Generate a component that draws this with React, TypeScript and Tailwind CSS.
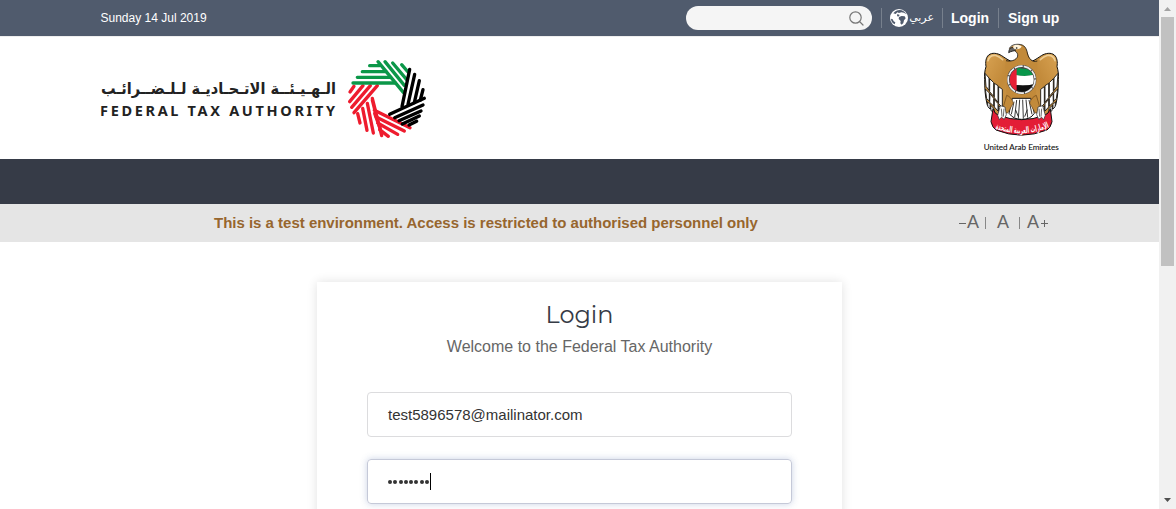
import React from "react";

function RingLogo() {
  return (
    <svg className="h-[100px] w-[100px] shrink-0" viewBox="0 0 300 300" fill="none" strokeWidth="10" strokeLinecap="round">
      <g stroke="#ee1c2e">
        <path d="M42 109L30 126M69 107L29 155M91 107L35 172M112 107L42 188" />
        <path d="M53 191L60 219M68 175L81 241M82 160L100 249M97 145L125 257M97 150L105 182" />
        <path d="M103 181L210 233M107 200L193 243M113 219L173 253M119 239L145 259M104 190L122 240" />
      </g>
      <g stroke="#0b9748">
        <path d="M89 47H118M67 65H138M52 82H152M39 99H166" />
        <path d="M114 35L190 127M135 35L193 106M158 39L200 89M185 44L204 66" />
      </g>
      <g stroke="#000">
        <path d="M209 58L186 170M224 73L204 163M238 92L223 158M249 119L241 150" />
        <path d="M253 145L149 193M249 165L164 203M243 183L177 212M238 198L187 222M230 214L207 225" />
      </g>
    </svg>
  );
}

function Wing() {
  return (
    <g>
      <path
        d="M150 76C128 84 112 70 95 59C82 51 66 49 56 57C47 65 46 79 48 92C44 104 43 118 44 131C44 156 45 180 52 208L72 229L94 251L108 231L124 197L150 180Z"
        fill="url(#gold)" stroke="#111" strokeWidth="3" strokeLinejoin="round"
      />
      <g fill="#fff" stroke="#111" strokeWidth="2.6" strokeLinejoin="round">
        <path d="M45 112L57 126V163L48 151ZM59 128L71 140V181L59 167ZM73 142L84 149V199L73 185ZM86 152L97 160V214L86 203Z" />
        <path d="M46 159L58 171V195L50 188ZM60 173L71 187V210L59 199ZM73 190L84 203V225L73 213ZM86 209L98 219L94 238L86 228Z" />
        <path d="M52 197L60 205V219L54 213ZM62 208L72 218V229L63 224Z" />
      </g>
      <path d="M54 74Q58 57 76 58Q88 62 98 71" stroke="#f7dfae" strokeWidth="5" fill="none" opacity=".75" strokeLinecap="round" />
    </g>
  );
}

function Emblem() {
  return (
    <svg className="h-[124px] w-[100px] shrink-0 overflow-visible" viewBox="0 0 300 372" fill="none">
      <defs>
        <linearGradient id="gold" x1="0" y1="0" x2="1" y2="1">
          <stop stopColor="#d9a353" />
          <stop offset=".45" stopColor="#c28a3a" />
          <stop offset="1" stopColor="#d3a155" />
        </linearGradient>
        <clipPath id="flag"><circle cx="155" cy="131" r="36" /></clipPath>
        <path id="ribbonLine" d="M73 277Q160 308 240 273" />
      </defs>
      <Wing />
      <g transform="matrix(-1 0 0 1 309 0)"><Wing /></g>
      <path d="M117 39C123 28 141 22 157 27C173 34 171 56 182 70Q189 80 202 78L198 178L175 209H132L109 176L106 76C126 78 143 70 143 58C143 49 135 42 117 39Z" fill="#c28a3a" />
      <path d="M118 38C121 29 133 24 146 25C164 25 170 39 172 51C176 69 187 80 202 75M108 74C128 79 145 68 143 56C142 50 138 47 134 45" stroke="#111" strokeWidth="2.4" />
      <path d="M130 29Q143 23 155 31Q151 43 130 39Z" fill="#fff4dd" />
      <path d="M129 35C121 34 117 39 116 50C123 45 131 46 138 42" fill="#666" stroke="#111" strokeWidth="2.5" />
      <circle cx="140" cy="36" r="2.5" fill="#111" />
      <path d="M127 187L117 232Q131 251 155 250Q181 251 193 232L182 187Z" fill="#fff" stroke="#111" strokeWidth="3" />
      <path d="M132 197L124 235M140 192L134 244M149 191L145 248M158 191L160 248M168 191L173 245M177 192L186 235M137 222L145 242M172 221L164 242" stroke="#111" strokeWidth="2.5" />
      <path d="M110 178Q124 183 130 201L113 231L95 229Z" fill="#c28a3a" stroke="#6b4517" strokeWidth="2" />
      <path d="M199 178Q185 183 179 201L196 231L214 229Z" fill="#c28a3a" stroke="#6b4517" strokeWidth="2" />
      <circle cx="155" cy="131" r="44" fill="#444" />
      <circle cx="155" cy="131" r="40.5" stroke="#eee" strokeWidth="5" strokeDasharray="25 3" />
      <g clipPath="url(#flag)">
        <path d="M138 93Q165 104 194 96V116Q166 123 138 117Z" fill="#08964a" />
        <path d="M138 117Q166 123 194 116V144Q166 151 138 147Z" fill="#fff" />
        <path d="M138 147Q166 151 194 144V168H138Z" fill="#111" />
        <path d="M118 94H140V168H118Z" fill="#e61e35" />
      </g>
      <path d="M69 218Q74 234 86 238Q155 264 223 238Q236 234 241 218L246 257Q242 275 231 282Q154 313 78 282Q67 275 63 257Z" fill="#e31d36" stroke="#111" strokeWidth="3" strokeLinejoin="round" />
      <text fontFamily="'DejaVu Sans', sans-serif" fontSize="26" fontWeight="700" fill="#fff" textAnchor="middle">
        <textPath href="#ribbonLine" startOffset="50%" textLength="166" lengthAdjust="spacingAndGlyphs">الإمارات العربية المتحدة</textPath>
      </text>
      <g fill="#fff" stroke="#333" strokeWidth="2.2" strokeLinejoin="round">
        <path d="M91 209L105 213L109 236L103 250L94 244L88 251L83 238Z" />
        <path d="M218 209L204 213L200 236L206 250L215 244L221 251L226 238Z" />
        <path d="M94 218L96 242M102 218L100 242M215 218L213 242M207 218L209 242" />
      </g>
      <text x="41" y="342" fontFamily="Lato, sans-serif" fontSize="24.5" fill="#111" stroke="#111" strokeWidth=".3" textLength="225" lengthAdjust="spacingAndGlyphs">United Arab Emirates</text>
    </svg>
  );
}

function Wordmark() {
  return (
    <svg className="h-[60px] w-[240px] shrink-0 overflow-visible" viewBox="0 0 240 60">
      <text x="118.5" y="26" textAnchor="middle" direction="rtl" fontFamily="'DejaVu Sans', sans-serif" fontSize="16" fontWeight="700" fill="#222" textLength="235" lengthAdjust="spacingAndGlyphs">الـهـيـئــة الاتـحـاديـة لـلـضــرائـب</text>
      <text x="0" y="48" fontFamily="'Noto Sans', sans-serif" fontSize="14.5" fontWeight="700" fill="#222" textLength="235" lengthAdjust="spacing">FEDERAL TAX AUTHORITY</text>
    </svg>
  );
}

function TopBar() {
  return (
    <div className="flex h-9 items-center bg-[#505b6d] pl-[100.5px] pr-[100px] text-white">
      <span className="text-xs">Sunday 14 Jul 2019</span>
      <div className="ml-auto flex h-6 w-[186px] items-center justify-end rounded-full bg-[#f5f5f5] pr-[8px]">
        <svg className="size-[15px]" viewBox="0 0 15 15" fill="none" stroke="#777" strokeWidth="1.2">
          <circle cx="6.5" cy="6.5" r="5.7" />
          <path d="M10.5 10.5L14 14" strokeLinecap="round" />
        </svg>
      </div>
      <div className="ml-[9px] flex h-5 w-[61px] items-center border-l border-[#77808d] pl-2">
        <svg className="size-[18px] shrink-0" viewBox="0 0 54 54">
          <circle cx="27" cy="27" r="27" fill="#fff" />
          <path d="M10 13C16 5 22 3 29 3C38 3 45 8 49 16L42 11L34 10L27 12L22 10L17 15Z" fill="#505b6d" />
          <path d="M22 15L29 18L25 23L21 21Z" fill="#505b6d" />
          <path d="M27 24L35 21L44 22L47 28L42 34L40 42L35 47L31 43L32 36L26 30Z" fill="#505b6d" />
          <path d="M3 29L8 31L11 37L16 40L14 46C7 42 3 36 3 29Z" fill="#505b6d" />
        </svg>
        <span className="-mt-px ml-[2px] w-6 shrink-0 whitespace-nowrap font-['DejaVu_Sans',sans-serif] text-[11px] leading-5" dir="rtl">عربي</span>
      </div>
      <a className="h-5 w-14 border-l border-[#77808d] pl-2 text-sm font-bold">Login</a>
      <a className="h-5 w-[61px] whitespace-nowrap border-l border-[#77808d] pl-[9px] text-sm font-bold">Sign up</a>
    </div>
  );
}

function NoticeBar() {
  return (
    <div className="flex h-[38px] items-center bg-[#e5e5e5] pl-[214px] pr-[110px]">
      <p className="whitespace-nowrap text-[15px] font-bold tracking-[-0.01px] text-[#97662e]">This is a test environment. Access is restricted to authorised personnel only</p>
      <div className="-mt-0.5 ml-auto flex h-6 items-center text-[18px] leading-6 text-[#666]">
        <svg className="mt-[3px] h-2 w-[8px]" viewBox="0 0 8 8"><path d="M0 3.5H7" stroke="#666" /></svg>
        <span className="w-[18px]">A</span>
        <i className="mt-0.5 h-3 w-px bg-[#888]" />
        <span className="ml-[11px] w-[22px]">A</span>
        <i className="mt-0.5 h-3 w-px bg-[#888]" />
        <span className="ml-[7px] w-[14px]">A</span>
        <svg className="mt-[3px] h-[8px] w-[8px]" viewBox="0 0 8 8"><path d="M0 3.5H7M3.5 0V7" stroke="#666" /></svg>
      </div>
    </div>
  );
}

function LoginCard() {
  return (
    <section className="mx-auto mt-10 h-[400px] w-[525px] bg-white px-[50px] pt-[15px] shadow-[0_0_10px_rgba(0,0,0,0.12)]">
      <h1 className="h-9">
        <svg className="mx-auto h-9 w-[70px] overflow-visible" viewBox="0 0 70 36">
          <text x="0.5" y="26" fontFamily="Montserrat, Lato, sans-serif" fontSize="25" fontWeight="400" fill="#363b46" textLength="68" lengthAdjust="spacingAndGlyphs">Login</text>
        </svg>
      </h1>
      <p className="mt-[2px] text-center text-base text-[#666]">Welcome to the Federal Tax Authority</p>
      <div className="mt-[33px] flex h-[45px] items-center rounded border border-[#dcdcde] px-5 pt-[2px] text-[15px] text-[#333]">test5896578@mailinator.com</div>
      <div className="mt-[22px] flex h-[45px] items-center rounded border border-[#c5c9d8] px-5 shadow-[0_0_7px_rgba(80,105,170,0.3)]">
        <div className="flex w-[42px] justify-between pr-px pt-px">
          {Array.from({ length: 8 }, (_, i) => <i key={i} className="size-1 rounded-full bg-[#333]" />)}
        </div>
        <i className="h-[17px] w-px bg-black" />
      </div>
    </section>
  );
}

function Scrollbar() {
  return (
    <aside className="flex w-[17px] shrink-0 flex-col items-center bg-[#f1f1f1]">
      <svg className="h-[17px] w-[17px] shrink-0" viewBox="0 0 17 17"><path d="M5 11L8.5 7L12 11Z" fill="#a3a3a3" /></svg>
      <div className="h-[249px] w-[13px] bg-[#c1c1c1]" />
      <svg className="mt-auto h-[17px] w-[17px] shrink-0" viewBox="0 0 17 17"><path d="M5 6L8.5 10L12 6Z" fill="#505050" /></svg>
    </aside>
  );
}

export default function App() {
  return (
    <div className="flex h-[509px] w-[1176px] overflow-hidden bg-white font-['Liberation_Sans',sans-serif]">
      <main className="h-full w-[1159px] shrink-0 overflow-hidden">
        <TopBar />
        <header className="flex h-[123px] justify-between border-t border-[#eee] pl-[100px] pr-[89px]">
          <div className="flex pt-[13px]">
            <div className="pt-[18px]"><Wordmark /></div>
            <RingLogo />
          </div>
          <div className="-mt-px"><Emblem /></div>
        </header>
        <nav className="h-[45px] bg-[#363b47]" />
        <NoticeBar />
        <LoginCard />
      </main>
      <Scrollbar />
    </div>
  );
}
